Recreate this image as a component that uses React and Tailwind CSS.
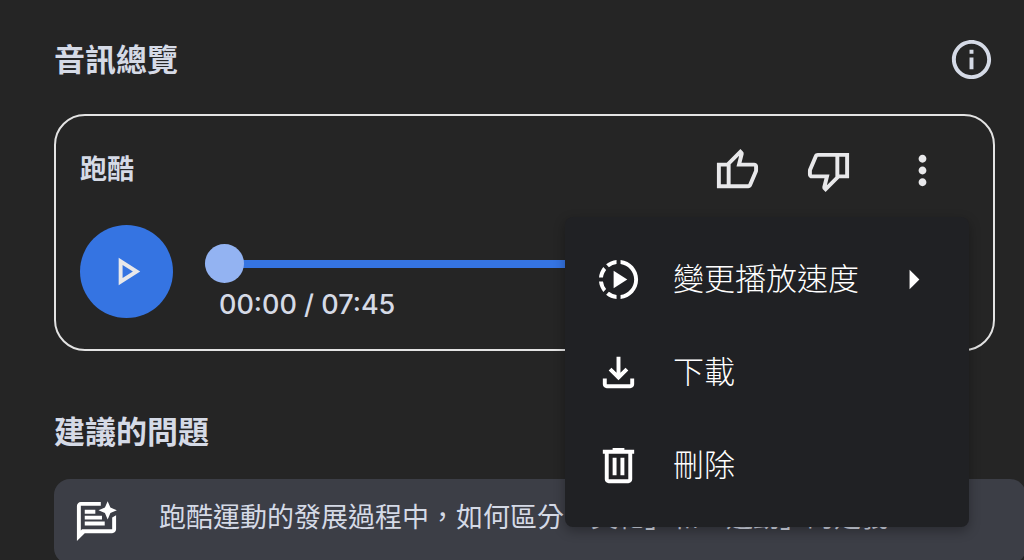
import React, { useState } from 'react';
import { MdMoreVert, MdArrowRight, MdOutlineInfo } from 'react-icons/md';

const ICON_PATHS = {
    thumbUp: 'M720-120H280v-520l280-280 50 50q7 7 11.5 19t4.5 23v14l-44 174h258q32 0 56 24t24 56v80q0 7-2 15t-4 15L794-168q-9 20-30 34t-44 14Zm-360-80h360l120-280v-80H480l54-220-174 174v406ZM280-640v80H160v360h120v80H80v-520h200Z',
    play: 'M320-200v-560l440 280-440 280Zm80-146 210-134-210-134v268Z',
    download: 'M480-320 280-520l56-58 104 104v-326h80v326l104-104 56 58-200 200ZM240-160q-33 0-56.5-23.5T160-240v-120h80v120h480v-120h80v120q0 33-23.5 56.5T720-160H240Z',
    trash: 'M280-120q-33 0-56.5-23.5T200-200v-520h-40v-80h200v-40h240v40h200v80h-40v520q0 33-23.5 56.5T680-120H280Zm400-600H280v520h400v-520ZM360-280h80v-360h-80v360Zm160 0h80v-360h-80v360Z',
};

const Symbol = ({ path, className = '' }) => (
    <svg viewBox="0 -960 960 960" fill="currentColor" aria-hidden="true" className={`size-[47px] shrink-0 ${className}`}>
        <path d={path} />
    </svg>
);

const SpeedIcon = () => (
    <svg viewBox="0 0 24 24" fill="currentColor" aria-hidden="true" className="size-[47px] shrink-0">
        <path d="M9.5 7.5v9l7-4.5z" />
        <path d="M11 4.07V2.05c-2.01.2-3.84 1-5.32 2.21L7.1 5.69A7.94 7.94 0 0 1 11 4.07zM5.69 7.1L4.26 5.68A9.95 9.95 0 0 0 2.05 11h2.02c.18-1.46.76-2.79 1.62-3.9zM4.07 13H2.05c.2 2.01 1 3.84 2.21 5.32l1.43-1.43A7.868 7.868 0 0 1 4.07 13zm1.61 6.74A9.981 9.981 0 0 0 11 21.95v-2.02a7.94 7.94 0 0 1-3.9-1.62l-1.42 1.43zM22 12c0 5.16-3.92 9.42-8.95 9.95v-2.02C16.97 19.41 20 16.05 20 12s-3.03-7.41-6.95-7.93V2.05C18.08 2.58 22 6.84 22 12z" />
    </svg>
);

const ChatSparkIcon = () => (
    <svg viewBox="0 0 24 24" fill="currentColor" aria-hidden="true" className="size-[47px] shrink-0">
        <path d="M2 22V4c0-1.1.9-2 2-2h10.2v2H4v12.6L4.6 16H20V9.9l2-1.1V16c0 1.1-.9 2-2 2H6z" />
        <path d="M6 6h5.4v2H6zM6 9h8.8v2H6zM6 12h10.2v2H6z" />
        <path d="M17.7 1.6l1.4 3.3 3.3 1.4-3.3 1.4-1.4 3.3-1.4-3.3-3.3-1.4 3.3-1.4z" />
    </svg>
);

const IconButton = ({ label, children, ...props }) => (
    <button
        type="button"
        aria-label={label}
        className="flex size-[93px] items-center justify-center text-[#e8e8ea]"
        {...props}
    >
        {children}
    </button>
);

const MenuItem = ({ icon, label, hasSubmenu = false }) => (
    <button
        type="button"
        role="menuitem"
        className="flex h-[93px] w-full items-center gap-[31px] pr-8 pl-[30px] text-left text-[31px] font-light text-white"
    >
        {icon}
        <span className="flex-1 pb-1">{label}</span>
        {hasSubmenu && <MdArrowRight className="size-[47px] shrink-0" />}
    </button>
);

const OptionsMenu = () => (
    <div
        role="menu"
        className="absolute top-[101px] right-6 z-10 w-[404px] rounded-lg bg-[#202124] pt-4 pb-[15px] shadow-[0_4px_12px_rgba(0,0,0,0.3)]"
    >
        <MenuItem icon={<SpeedIcon />} label="變更播放速度" hasSubmenu />
        <MenuItem icon={<Symbol path={ICON_PATHS.download} />} label="下載" />
        <MenuItem icon={<Symbol path={ICON_PATHS.trash} />} label="刪除" />
    </div>
);

const formatTime = (seconds) => {
    const m = String(Math.floor(seconds / 60)).padStart(2, '0');
    const s = String(seconds % 60).padStart(2, '0');
    return `${m}:${s}`;
};

const AudioCard = ({ title, duration }) => {
    const [position, setPosition] = useState(0);
    const [menuOpen, setMenuOpen] = useState(true);

    return (
        <article className="relative mt-[31px] rounded-[31px] border-2 border-[#e3e3e3] px-6 pt-2 pb-[31px]">
            <div className="flex items-center">
                <h3 className="flex-1 pb-1 text-[27px] font-bold">{title}</h3>
                <IconButton label="喜歡">
                    <Symbol path={ICON_PATHS.thumbUp} />
                </IconButton>
                <IconButton label="不喜歡">
                    <Symbol path={ICON_PATHS.thumbUp} className="rotate-180" />
                </IconButton>
                <IconButton label="更多選項" aria-expanded={menuOpen} onClick={() => setMenuOpen(!menuOpen)}>
                    <MdMoreVert className="size-[47px]" />
                </IconButton>
            </div>

            <div className="mt-2 flex items-start gap-8">
                <button
                    type="button"
                    aria-label="播放"
                    className="flex size-[93px] shrink-0 items-center justify-center rounded-full bg-[#3574e2] text-[#e8e8ea]"
                >
                    <Symbol path={ICON_PATHS.play} />
                </button>
                <div className="flex-1 pt-[19px]">
                    <input
                        type="range"
                        aria-label="播放進度"
                        min={0}
                        max={duration}
                        value={position}
                        onChange={(e) => setPosition(Number(e.target.value))}
                        className="block h-[39px] w-full appearance-none bg-transparent [&::-webkit-slider-runnable-track]:h-2 [&::-webkit-slider-runnable-track]:rounded-full [&::-webkit-slider-runnable-track]:bg-[#3574e2] [&::-webkit-slider-thumb]:-mt-4 [&::-webkit-slider-thumb]:size-[39px] [&::-webkit-slider-thumb]:appearance-none [&::-webkit-slider-thumb]:rounded-full [&::-webkit-slider-thumb]:bg-[#93b3f2]"
                    />
                    <p className="mt-[9px] pl-[14px] font-['Inter',sans-serif] text-[27px] leading-[26px] font-medium">
                        {formatTime(position)} / {formatTime(duration)}
                    </p>
                </div>
            </div>

            {menuOpen && <OptionsMenu />}
        </article>
    );
};

export default function App() {
    return (
        <main
            lang="zh-Hant"
            className="h-screen overflow-hidden bg-[#252525] pt-9 pr-[29px] pl-[54px] font-['Noto_Sans_CJK_TC',sans-serif] text-[#d5dae6]"
        >
            <section>
                <header className="flex items-start justify-between">
                    <h2 className="text-[31px] leading-[43px] font-bold">音訊總覽</h2>
                    <button type="button" aria-label="資訊">
                        <MdOutlineInfo className="size-[47px]" />
                    </button>
                </header>
                <AudioCard title="跑酷" duration={465} />
            </section>

            <section className="mt-[57px]">
                <h2 className="text-[31px] leading-[43px] font-bold">建議的問題</h2>
                <button
                    type="button"
                    className="mt-7 -mr-[31px] flex w-[calc(100%+31px)] items-start gap-[39px] rounded-2xl bg-[#3c3e46] py-[19px] pr-6 pl-[19px] text-left"
                >
                    <span className="text-white">
                        <ChatSparkIcon />
                    </span>
                    <span className="text-[27px] leading-[35px]">
                        跑酷運動的發展過程中，如何區分「文化」和「運動」的定義
                    </span>
                </button>
            </section>
        </main>
    );
}
